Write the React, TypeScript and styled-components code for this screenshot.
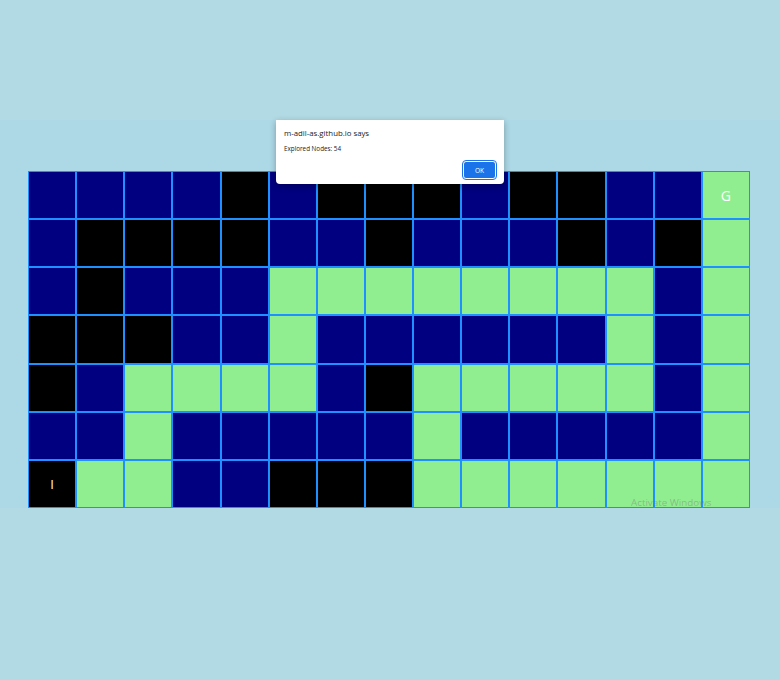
import styled, { createGlobalStyle } from "styled-components";

const GlobalStyle = createGlobalStyle`
  html, body {
    margin: 0;
    padding: 0;
    background: #b2dae4;
    font-family: "Open Sans", "Liberation Sans", Arial, sans-serif;
  }
`;

type Kind = "N" | "B" | "G";

const maze: string[] = [
  "NNNNBNBBBNBBNNG",
  "NBBBBNNBNNNBNBG",
  "NBNNNGGGGGGGGNG",
  "BBBNNGNNNNNNGNG",
  "BNGGGGNBGGGGGNG",
  "NNGNNNNNGNNNNNG",
  "BGGNNBBBGGGGGGG",
];

const colours: Record<Kind, string> = {
  N: "#000080",
  B: "#000000",
  G: "#90ee90",
};

const Page = styled.div`
  position: relative;
  width: 780px;
  height: 680px;
  overflow: hidden;
`;

const TopSpace = styled.div`
  height: 120px;
`;

const Band = styled.div`
  background: #add8e6;
  height: 337px;
  padding: 51px 0 0 28px;
`;

const Grid = styled.div`
  display: grid;
  grid-template-columns: repeat(15, 1fr);
  grid-template-rows: repeat(7, 1fr);
  width: 722px;
  height: 337px;
`;

const Cell = styled.div<{ $kind: Kind }>`
  box-sizing: border-box;
  border: 1px solid #1e90ff;
  background: ${(p) => colours[p.$kind]};
  display: flex;
  align-items: center;
  justify-content: center;
  color: #ffffff;
  font-size: 14px;
`;

const StartMark = styled.span`
  color: #fff6e0;
  font-size: 13px;
`;

const Dialog = styled.div`
  position: absolute;
  left: 276px;
  top: 120px;
  width: 228px;
  height: 64px;
  box-sizing: border-box;
  background: #ffffff;
  border-radius: 0 0 4px 4px;
  box-shadow: 0 2px 6px rgba(0, 0, 0, 0.3);
  padding: 7px 8px 0 8px;
  display: flex;
  flex-direction: column;
`;

const DialogTitle = styled.div`
  font-size: 7.8px;
  color: #202124;
  line-height: 12px;
`;

const DialogBody = styled.div`
  font-size: 6.3px;
  color: #202124;
  margin-top: 5px;
  line-height: 10px;
`;

const Actions = styled.div`
  display: flex;
  justify-content: flex-end;
  margin-top: 7px;
`;

const OkButton = styled.button`
  width: 33px;
  height: 18px;
  box-sizing: border-box;
  background: #1a73e8;
  color: #ffffff;
  border: 1px solid #ffffff;
  outline: 1px solid #1a73e8;
  border-radius: 3px;
  font-family: inherit;
  font-size: 6.5px;
  padding: 0;
`;

const Watermark = styled.div`
  position: absolute;
  left: 631px;
  top: 496px;
  font-family: "Open Sans", "Liberation Sans", sans-serif;
  font-size: 9.8px;
  color: rgba(120, 120, 120, 0.45);
`;

export default function App() {
  return (
    <>
      <GlobalStyle />
      <Page>
        <TopSpace />
        <Band>
          <Grid>
            {maze.map((row, r) =>
              row.split("").map((k, c) => (
                <Cell key={`${r}-${c}`} $kind={k as Kind}>
                  {r === 0 && c === 14 && "G"}
                  {r === 6 && c === 0 && <StartMark>I</StartMark>}
                </Cell>
              ))
            )}
          </Grid>
        </Band>
        <Dialog>
          <DialogTitle>m-adil-as.github.io says</DialogTitle>
          <DialogBody>Explored Nodes: 54</DialogBody>
          <Actions>
            <OkButton>OK</OkButton>
          </Actions>
        </Dialog>
        <Watermark>Activate Windows</Watermark>
      </Page>
    </>
  );
}
